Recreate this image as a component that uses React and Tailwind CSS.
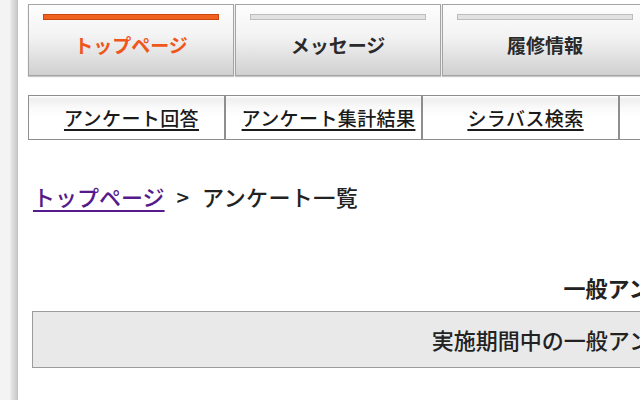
import React from "react";

const mainTabs = [
  { label: "トップページ", active: true },
  { label: "メッセージ", active: false },
  { label: "履修情報", active: false },
];

const subTabs = ["アンケート回答", "アンケート集計結果", "シラバス検索", ""];

const App = () => {
  return (
    <div
      className="flex w-[640px] h-[400px] overflow-hidden bg-white text-[#222]"
      style={{ fontFamily: '"Noto Sans CJK JP", "Noto Sans", sans-serif' }}
    >
      {/* left frame strip */}
      <div className="w-[18px] shrink-0 bg-[linear-gradient(to_right,#f3f3f3_0px,#f3f3f3_10px,#e6e6e6_11px,#cbcbcb_17px,#b9b9b9_18px)]" />

      <div className="flex-1 pl-[10px] pt-[4px]">
        {/* main tabs */}
        <div className="flex gap-[1px]">
          {mainTabs.map((tab) => (
            <div
              key={tab.label}
              className="w-[206px] h-[72px] shrink-0 flex flex-col border border-[#a4a4a4] shadow-[0_1px_1px_#c8c8c8] bg-[linear-gradient(to_bottom,#fdfdfd_0%,#f3f3f3_45%,#d0d0d0_100%)]"
            >
              <div
                className={
                  tab.active
                    ? "mx-[14px] mt-[9px] h-[6px] bg-[#f2621f] border border-[#c9460f]"
                    : "mx-[14px] mt-[9px] h-[6px] bg-[#e2e2e2] border border-[#bdbdbd]"
                }
              />
              <div
                className={
                  tab.active
                    ? "mt-[11px] text-center text-[19px] leading-[28px] font-bold text-[#f0561a]"
                    : "mt-[11px] text-center text-[19px] leading-[28px] font-bold text-[#2a2a2a]"
                }
              >
                {tab.label}
              </div>
            </div>
          ))}
        </div>

        {/* sub tabs */}
        <div className="flex mt-[19px]">
          {subTabs.map((label, i) => (
            <div
              key={i}
              className="w-[197px] h-[45px] shrink-0 flex items-center justify-center pl-[10px] border border-[#8e8e8e] bg-[linear-gradient(to_bottom,#ffffff_0px,#efefef_3px,#fafafa_12px,#ffffff_22px)]"
            >
              {label && (
                <a className="text-[19px] leading-[26px] tracking-[0.4px] font-medium text-[#1a1a1a] underline decoration-[1.5px] underline-offset-[3px]">
                  {label}
                </a>
              )}
            </div>
          ))}
        </div>

        {/* breadcrumb */}
        <div className="mt-[40px] pl-[5px] flex items-center text-[22px] leading-[32px] font-medium whitespace-nowrap">
          <a className="text-[#551a8b] underline decoration-[1.5px] underline-offset-[4px]">トップページ</a>
          <span className="ml-[12px] text-[#222]">&gt;</span>
          <span className="ml-[13px] tracking-[0.4px] text-[#222]">アンケート一覧</span>
        </div>

        {/* content */}
        <div className="w-[1216px] ml-[4px]">
          <h2 className="mt-[59px] text-center text-[22px] leading-[32px] font-bold text-[#222]">
            一般アンケート
          </h2>
          <div className="mt-[8px] h-[57px] flex items-center justify-center bg-[#e9e9e9] border border-[#9c9c9c] text-[22px] font-medium text-[#222]">
            実施期間中の一般アンケートはありません
          </div>
        </div>
      </div>
    </div>
  );
};

export default App;
